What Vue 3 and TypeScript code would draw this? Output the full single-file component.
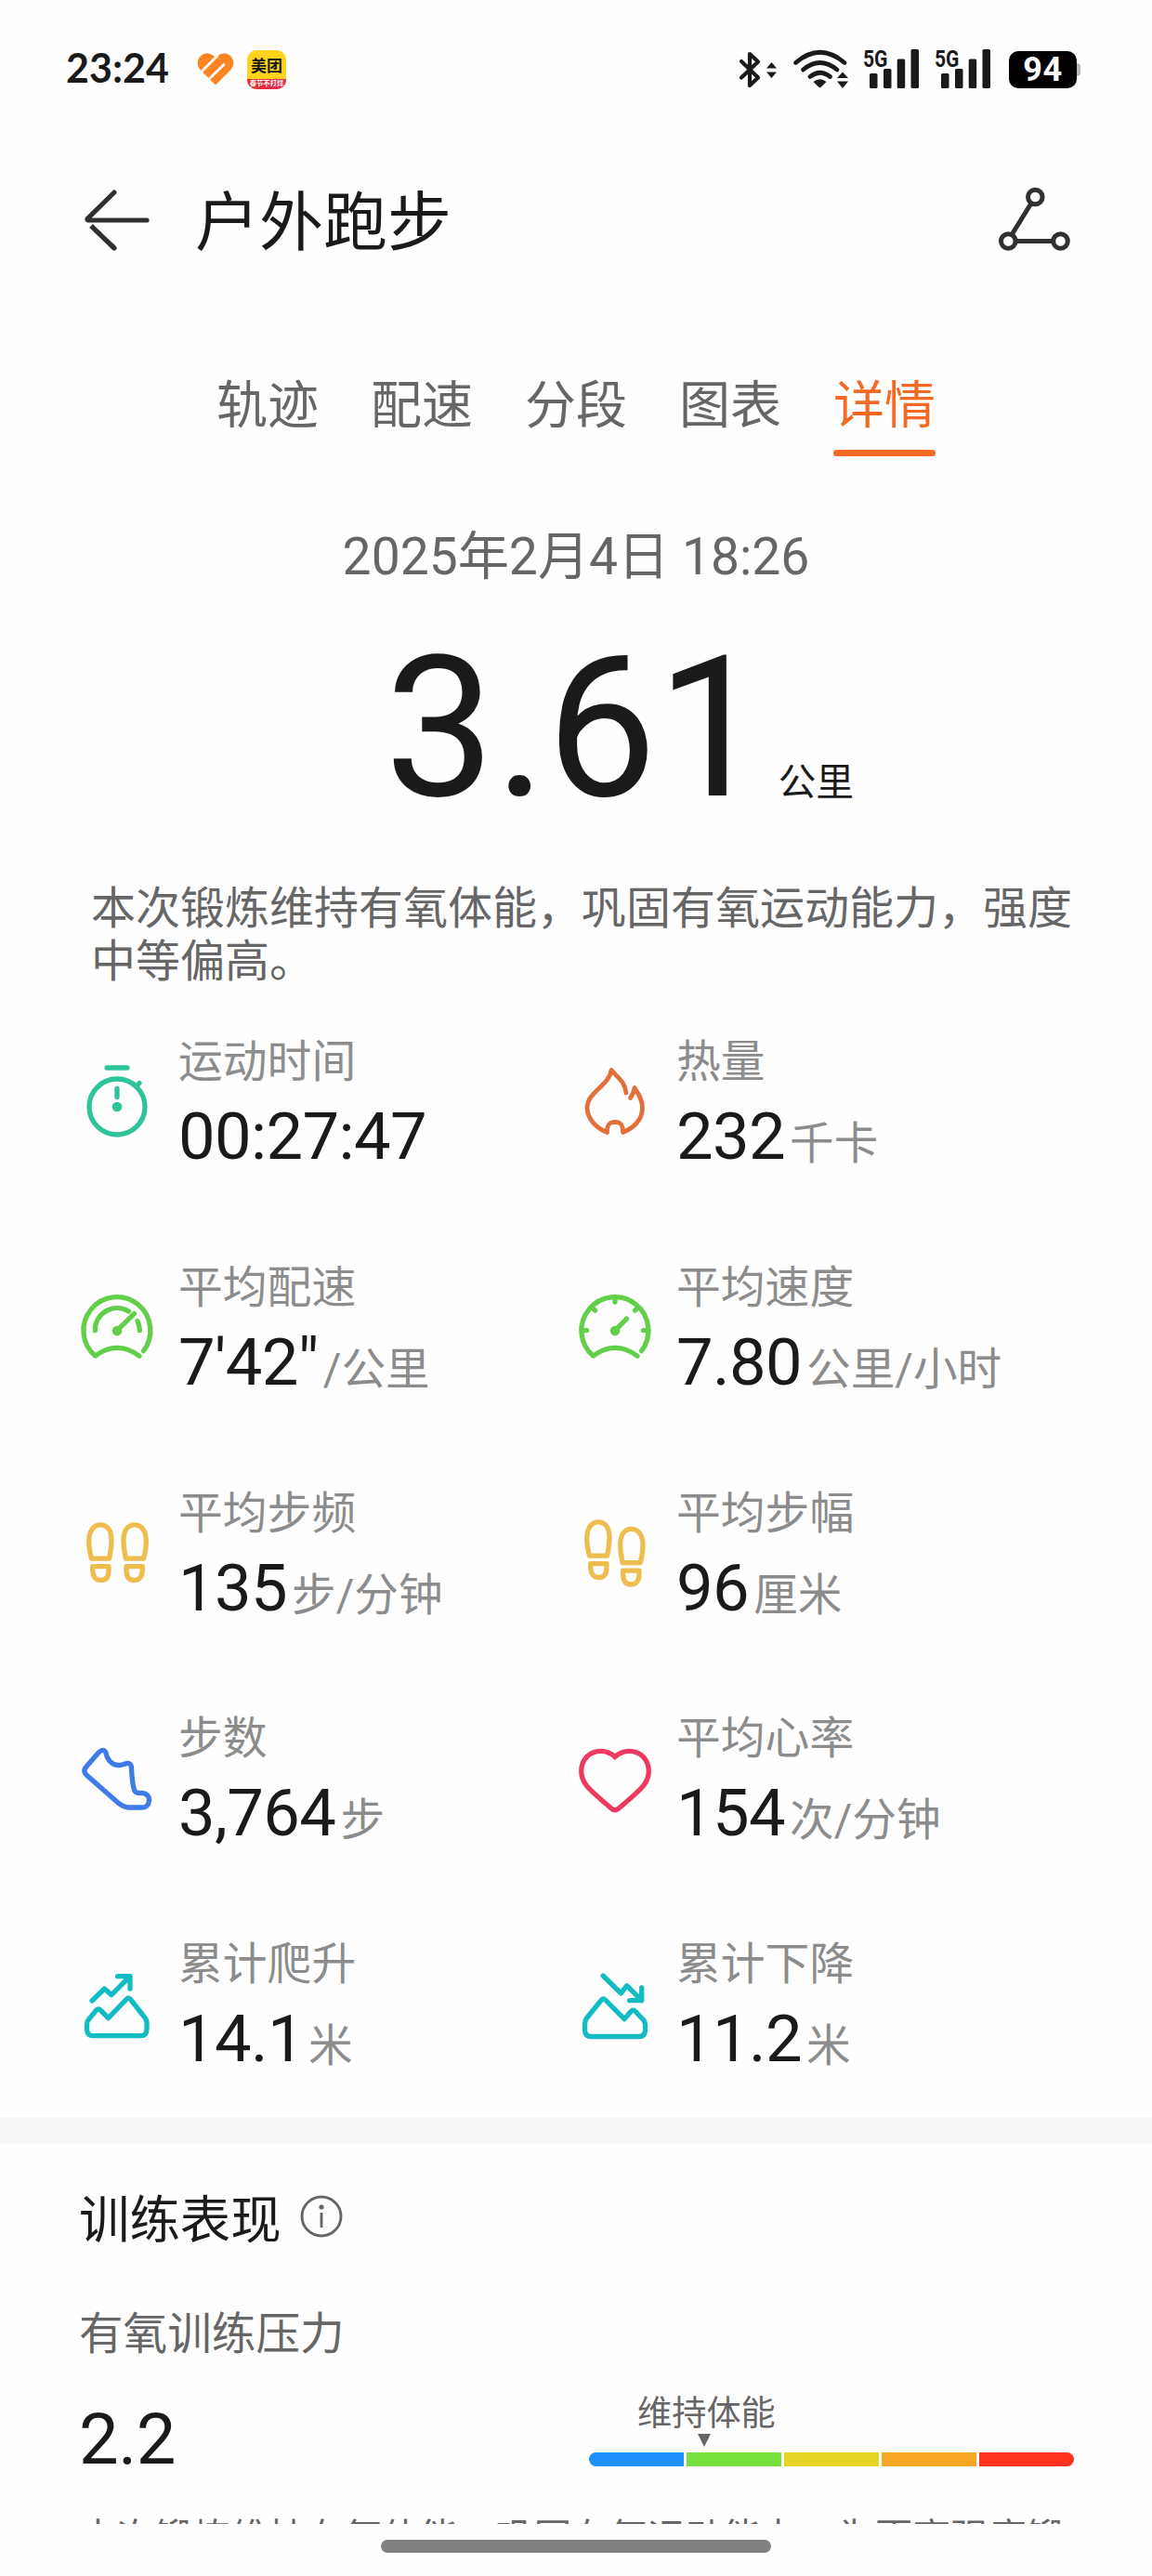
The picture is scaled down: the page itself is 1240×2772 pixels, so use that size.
<script setup lang="ts">
type IconName =
  | 'timer' | 'flame' | 'pace' | 'speed' | 'cadence'
  | 'stride' | 'shoe' | 'heart' | 'ascent' | 'descent'

interface Metric {
  icon: IconName
  color: string
  label: string
  value: string
  unit: string
}

const tabs: string[] = ['轨迹', '配速', '分段', '图表', '详情']
const activeTab = '详情'

const metrics: Metric[] = [
  { icon: 'timer', color: '#2fc39b', label: '运动时间', value: '00:27:47', unit: '' },
  { icon: 'flame', color: '#e2703a', label: '热量', value: '232', unit: '千卡' },
  { icon: 'pace', color: '#62cf4b', label: '平均配速', value: '7\'42"', unit: '/公里' },
  { icon: 'speed', color: '#62cf4b', label: '平均速度', value: '7.80', unit: '公里/小时' },
  { icon: 'cadence', color: '#efbd4d', label: '平均步频', value: '135', unit: '步/分钟' },
  { icon: 'stride', color: '#efbd4d', label: '平均步幅', value: '96', unit: '厘米' },
  { icon: 'shoe', color: '#3f7be8', label: '步数', value: '3,764', unit: '步' },
  { icon: 'heart', color: '#ee3a60', label: '平均心率', value: '154', unit: '次/分钟' },
  { icon: 'ascent', color: '#12bcc3', label: '累计爬升', value: '14.1', unit: '米' },
  { icon: 'descent', color: '#12bcc3', label: '累计下降', value: '11.2', unit: '米' },
]

const zones: string[] = ['#1f8fff', '#76e03f', '#e6d522', '#f5a623', '#ff3320']

const sole = 'M24 11.3C16 11.3 11.7 19 11.7 29C11.7 36 13 42 14.5 47.7H33.5C34.5 42 36 38 36 28C36 18 32 11.3 24 11.3Z'
const heel = 'M15.7 56.2H33V60C33 68 29.5 71 24.7 71C19 71 15.7 67 15.7 60Z'
</script>

<template>
  <main class="screen">
    <div class="status">
      <div class="status-left">
        <span class="clock">23:24</span>
        <svg class="health" width="40" height="35" viewBox="0 0 40 35">
          <defs>
            <clipPath id="heart-clip">
              <path d="M20 34.500L3.500 18C-1 13 0 5 6 1.800C11-.8 16 .5 20 5C24 .5 30-.8 35 2.200C40.500 6 40.500 14 36 18.500Z" />
            </clipPath>
          </defs>
          <g clip-path="url(#heart-clip)">
            <rect width="40" height="35" fill="#fd8521" />
            <path d="M3 22L22 3M12 29L29 12.500" fill="none" stroke="#fefefe" stroke-width="2.800" stroke-linecap="round" />
          </g>
        </svg>
        <span class="meituan">
          <span class="mt-name">美团</span>
          <span class="mt-sub">春节不打烊</span>
        </span>
      </div>
      <div class="status-right">
        <svg class="signals" width="300" height="46" viewBox="0 0 300 46" fill="#1a1a1a">
          <g fill="none" stroke="#1a1a1a" stroke-width="4.200" stroke-linejoin="round" stroke-linecap="round">
            <path d="M4 14L22 31.500L13 40V6L22 14.500L4 31.500" />
          </g>
          <path d="M36.500 15L42 21.500H31ZM36.500 32L42 25.500H31Z" />
          <g fill="none" stroke="#1a1a1a" stroke-width="4.800" stroke-linecap="round">
            <path d="M62.500 15.500Q88.500-7 115 15.500" />
            <path d="M70.500 23Q88.500 8 107 23" />
            <path d="M78 30.500Q88.500 22 99.500 30.500" />
          </g>
          <path d="M81.500 36Q88.500 30.500 95.500 36L90 41.500Q88.500 43 87 41.500Z" />
          <path d="M113 25.500L119 32H107ZM113 43L119 35.500H107Z" />
          <g v-for="dx in [0, 77]" :key="dx" :transform="`translate(${dx} 0)`">
            <text class="net" x="135" y="19.500" textLength="26.500" lengthAdjust="spacingAndGlyphs">5G</text>
            <rect x="142" y="27" width="8.500" height="16" rx="1.500" />
            <rect x="157" y="22" width="8.500" height="21" rx="1.500" />
            <rect x="171.700" y="11.500" width="8.500" height="31.500" rx="1.500" />
            <rect x="186.500" y="1" width="8.500" height="42" rx="1.500" />
          </g>
        </svg>
        <span class="battery">94</span>
        <span class="nub"></span>
      </div>
    </div>

    <header class="header">
      <svg class="back" width="72" height="68" viewBox="0 0 72 68" fill="none" stroke="#303030" stroke-width="5.200" stroke-linecap="round">
        <path d="M33 5L4 33.500Q3.500 34.500 5 35H68" />
        <path d="M8 41L33 65" stroke-linecap="butt" />
        <path d="M30 62L33 65" />
      </svg>
      <h1 class="title">户外跑步</h1>
      <svg class="route" width="78" height="70" viewBox="0 0 78 70" fill="none" stroke="#303030" stroke-width="5">
        <path d="M34.500 18.500L15 50M19 58.500H58" />
        <circle cx="39.300" cy="11" r="7.800" />
        <circle cx="10.300" cy="58.500" r="7.800" />
        <circle cx="66.500" cy="58.500" r="7.800" />
      </svg>
    </header>

    <nav class="tabs">
      <span v-for="tab in tabs" :key="tab" class="tab" :class="{ active: tab === activeTab }">{{ tab }}</span>
    </nav>

    <p class="date">2025年2月4日 18:26</p>

    <div class="distance">
      <span class="number">3.61</span>
      <span class="km">公里</span>
    </div>

    <p class="summary">本次锻炼维持有氧体能，巩固有氧运动能力，强度中等偏高。</p>

    <section class="metrics">
      <div v-for="m in metrics" :key="m.label" class="metric">
        <svg class="icon" width="84" height="84" viewBox="0 0 84 84" fill="none" :stroke="m.color" stroke-width="5.300" stroke-linecap="round" stroke-linejoin="round">
          <template v-if="m.icon === 'timer'">
            <circle cx="42" cy="47" r="30" />
            <path d="M31 5H53M42 27.500V36.500M63 24.500L66 21.500" />
            <circle cx="42" cy="47" r="5.300" :fill="m.color" stroke="none" />
          </template>
          <template v-else-if="m.icon === 'flame'">
            <path stroke-width="4.800" d="M54 32C53 20 44 15 38 7.500C36 24 12 31 12 48C12 60 22 70 33.500 74.500C33.500 66 36 63.500 42 63.500C48 63.500 50.500 66 50.500 74.500C62 70 71.500 61 71.500 48C71.500 39 67 33 63 26.500C62.500 31 61 34 58.500 37.500" />
          </template>
          <template v-else-if="m.icon === 'pace'">
            <g transform="translate(0 -1.400)">
              <path d="M70.500 68A36 36 0 1 0 18.500 73.500Q42 56 66 73.500" />
              <path d="M18.300 46A23.700 23.700 0 0 1 54.500 25.500M64 36Q66 40 66.300 46" />
              <path d="M42 46L60.500 28" />
              <circle cx="42" cy="46.500" r="5.300" :fill="m.color" stroke="none" />
            </g>
          </template>
          <template v-else-if="m.icon === 'speed'">
            <g transform="translate(0 -1.400)">
              <path d="M70.500 68A36 36 0 1 0 18.500 73.500Q42 56 66 73.500" />
              <path d="M6 46H11.500M78 46H72.500M42 10V15.500M17 21L20.500 24.500M67 21L63.500 24.500M42 46L54.500 33.500" />
              <circle cx="42" cy="46.500" r="5.300" :fill="m.color" stroke="none" />
            </g>
          </template>
          <template v-else-if="m.icon === 'cadence' || m.icon === 'stride'">
            <g :transform="m.icon === 'stride' ? 'translate(0 -3.500)' : 'translate(0 -.5)'">
              <path :d="sole" /><path :d="heel" />
            </g>
            <g :transform="m.icon === 'stride' ? 'translate(83.700 4) scale(-1 1)' : 'translate(85 -.5) scale(-1 1)'">
              <path :d="sole" /><path :d="heel" />
            </g>
          </template>
          <template v-else-if="m.icon === 'shoe'">
            <path d="M22.500 13.500Q27.500 9 30 14C31 21 36 27 43 27.500C48 27.500 49 26 53 25.500Q57 25 57.500 30C58 40 58 46 60.500 54Q61.500 57.500 66 57.500C75 57 77 62 76.500 66Q75.500 73 69 73H55C50 73 46 70.500 42 67L9 38Q5 34 8.500 29.500Z" />
          </template>
          <template v-else-if="m.icon === 'heart'">
            <path d="M42 18.500C36 13 31 12.300 27 12.300C14 12.300 5.700 22 5.700 34C5.700 48 16 55 38 74Q42 77.500 46 74C68 55 78.300 48 78.300 34C78.300 22 70 12.300 57 12.300C53 12.300 48 13 42 18.500Z" stroke-linejoin="miter" />
          </template>
          <template v-else-if="m.icon === 'ascent'">
            <path d="M15 38L28.500 25L36 31.700L56 11.700M42.600 11.700H56V25" />
            <path d="M11.500 58L20 47.800Q22 46 24 47.800L32.500 56.700L52.500 36Q54.500 34.500 56.500 36.500L71 55Q74 58 74 62V69Q73.500 75.700 68 75.700H16Q10 75.700 9.500 69V63Q9.500 60 11.500 58Z" />
          </template>
          <template v-else>
            <path d="M29 11L48.500 30L54.700 21.700L70.700 37.700M57.700 37.700H70.700V24" />
            <path d="M12 56L27.500 37Q29.500 35 31.500 37L52 57.700L59.500 49Q61.500 47.500 63.500 49L72.500 58.500Q74.500 61 74.500 64V70Q74 76.500 68 76.500H16Q10 76.500 9.500 70V63Q9.500 59 12 56Z" />
          </template>
        </svg>
        <div class="text">
          <span class="label">{{ m.label }}</span>
          <span class="reading"><span class="value">{{ m.value }}</span><span class="unit">{{ m.unit }}</span></span>
        </div>
      </div>
    </section>

    <div class="divider"></div>

    <section class="training">
      <div class="heading">
        <h2>训练表现</h2>
        <svg width="46" height="46" viewBox="0 0 46 46" fill="none" stroke="#666" stroke-width="2.900">
          <circle cx="23" cy="23" r="21" />
          <path d="M23 19V35" />
          <circle cx="23" cy="13" r="2.600" fill="#666" stroke="none" />
        </svg>
      </div>
      <p class="sub">有氧训练压力</p>
      <div class="load">
        <span class="score">2.2</span>
        <div class="scale">
          <span class="zone-name">维持体能</span>
          <span class="pointer"></span>
          <div class="bar">
            <span v-for="c in zones" :key="c" class="zone" :style="{ background: c }"></span>
          </div>
        </div>
      </div>
      <p class="advice">本次锻炼维持有氧体能，巩固有氧运动能力，为更高强度锻</p>
    </section>

    <div class="home"></div>
  </main>
</template>

<style>
body {
  background: #fefefe;
}
</style>

<style scoped>
.screen {
  width: 1240px;
  height: 2772px;
  overflow: hidden;
  display: flex;
  flex-direction: column;
  background: #fefefe;
  color: #1a1a1a;
  font-family: Roboto, "Noto Sans CJK SC", sans-serif;
  font-weight: 400;
}
p, h1, h2 {
  margin: 0;
  font-weight: 400;
}
.status {
  display: flex;
  justify-content: space-between;
  height: 149px;
  padding: 0 77px 0 71px;
  box-sizing: border-box;
  flex: none;
}
.status-left, .status-right {
  display: flex;
  align-items: center;
  height: 149px;
}
.clock {
  width: 141px;
  margin-bottom: 4px;
  font: 700 43px/50px Lato, sans-serif;
  white-space: nowrap;
}
.meituan {
  width: 42px;
  height: 42px;
  margin-left: 14px;
  border-radius: 10px;
  overflow: hidden;
  display: flex;
  flex-direction: column;
  background: #fdd31d;
}
.mt-name {
  height: 31px;
  font: 700 17px/31px "Noto Sans CJK SC", sans-serif;
  text-align: center;
}
.mt-sub {
  height: 11px;
  background: linear-gradient(90deg, #e8302a, #e52a5c);
  color: #fff;
  font: 700 7.300px/9px "Noto Sans CJK SC", sans-serif;
  text-align: center;
  white-space: nowrap;
}
.signals {
  overflow: visible;
}
.net {
  font: 700 26.500px Roboto, sans-serif;
}
.battery {
  width: 73px;
  height: 40px;
  margin-left: -8px;
  border-radius: 10px;
  background: #000;
  color: #fff;
  font: 700 36px/40px Roboto, sans-serif;
  letter-spacing: 0.5px;
  text-align: center;
}
.nub {
  width: 4px;
  height: 14px;
  background: #b8b8b8;
  border-radius: 0 4px 4px 0;
}
.header {
  display: flex;
  align-items: center;
  height: 94px;
  margin-top: 45px;
  padding: 0 87px 0 90px;
  flex: none;
}
.back {
  margin-bottom: 10px;
}
.title {
  margin-left: 48px;
  font-size: 69px;
  line-height: 94px;
}
.route {
  margin-left: auto;
  margin-bottom: 11px;
}
.tabs {
  display: flex;
  justify-content: center;
  gap: 56px;
  margin-top: 113px;
  height: 90px;
  flex: none;
}
.tab {
  width: 110px;
  box-sizing: border-box;
  text-align: center;
  font-size: 55px;
  line-height: 70px;
  color: #666;
}
.tab.active {
  color: #f26a25;
}
.tab.active::after {
  content: "";
  display: block;
  height: 7px;
  margin-top: 13px;
  border-radius: 4px;
  background: #f26a25;
}
.date {
  margin-top: 73px;
  text-align: center;
  font-size: 55.200px;
  line-height: 70px;
  color: #666;
}
.distance {
  display: flex;
  align-items: baseline;
  margin-top: 40px;
  padding-left: 414px;
  height: 220px;
  line-height: 220px;
  flex: none;
}
.number {
  font-size: 211px;
}
.km {
  margin-left: 12px;
  font-size: 40.800px;
}
.summary {
  width: 1070px;
  margin: 55px 0 0 98px;
  font-size: 48px;
  line-height: 57px;
  color: #666;
}
.metrics {
  display: grid;
  grid-template-columns: 536px 536px;
  row-gap: 91.750px;
  margin: 50px 0 0 84px;
}
.metric {
  display: flex;
  height: 151px;
}
.icon {
  margin-top: 31px;
  overflow: visible;
}
.text {
  display: flex;
  flex-direction: column;
  gap: 9px;
  margin-left: 24px;
}
.label {
  font-size: 47.800px;
  line-height: 60px;
  color: #8c8c8c;
}
.reading {
  line-height: 82px;
  white-space: nowrap;
}
.value {
  font-size: 70.500px;
  letter-spacing: -0.600px;
}
.unit {
  margin-left: 5px;
  font-size: 47.600px;
  color: #8c8c8c;
}
.divider {
  height: 27px;
  margin-top: 44px;
  background: #f7f7f7;
  flex: none;
}
.training {
  padding: 0 84px 0 85px;
}
.heading {
  display: flex;
  align-items: center;
  gap: 20px;
  margin-top: 47px;
}
.heading h2 {
  font-size: 54.400px;
  line-height: 74px;
}
.heading svg {
  margin-bottom: 11px;
}
.sub {
  margin-top: 55px;
  font-size: 47.600px;
  line-height: 60px;
  color: #666;
}
.load {
  display: flex;
  justify-content: space-between;
  align-items: flex-start;
  margin-top: 27px;
}
.score {
  margin-top: 11px;
  font-size: 76px;
  letter-spacing: -0.500px;
  line-height: 90px;
}
.scale {
  display: flex;
  flex-direction: column;
  width: 522px;
  margin-top: 6px;
}
.zone-name {
  margin-left: 52px;
  font-size: 37.200px;
  line-height: 44px;
  color: #666;
}
.pointer {
  width: 0;
  margin: 0 0 0 117px;
  border: 7px solid transparent;
  border-top: 14px solid #666;
  border-bottom: 0;
}
.bar {
  display: flex;
  gap: 3px;
  height: 15px;
  margin-top: 6px;
  border-radius: 7.500px;
  overflow: hidden;
}
.zone {
  flex: 1;
}
.advice {
  height: 9px;
  margin-top: 37px;
  overflow: hidden;
  font-size: 40.800px;
  line-height: 48px;
  color: #666;
  white-space: nowrap;
}
.home {
  width: 420px;
  height: 14px;
  margin: 17px auto 0;
  border-radius: 7px;
  background: #808080;
  flex: none;
}
</style>
